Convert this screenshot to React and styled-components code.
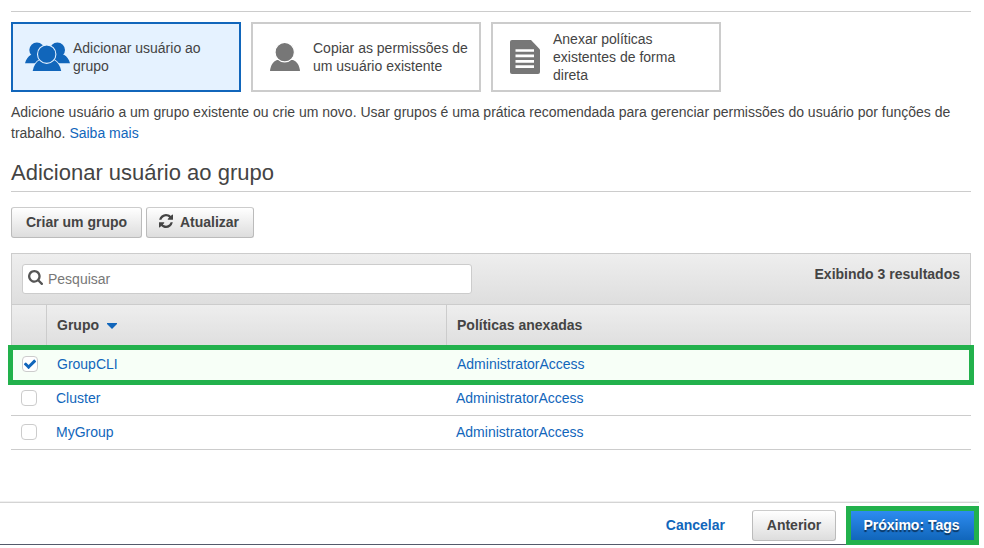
import React from "react";
import styled, { createGlobalStyle } from "styled-components";

const GlobalStyle = createGlobalStyle`
  * { box-sizing: border-box; }
  html, body { margin: 0; background: #fff; overflow: hidden; }
  body {
    font-family: "Liberation Sans", Arial, sans-serif;
    font-size: 14px;
    color: #444;
  }
`;

const Page = styled.div`
  width: 979px;
  height: 545px;
  overflow: hidden;
  display: flex;
  flex-direction: column;
`;

const Content = styled.main`
  height: 501px;
  flex: none;
  padding: 11px 8px 0 11px;
`;

const OptionList = styled.div`
  display: flex;
  gap: 10px;
  padding-top: 10px;
  border-top: 1px solid #ccc;
`;

const OptionCard = styled.div`
  width: 230px;
  height: 70px;
  display: flex;
  align-items: center;
  border: 2px solid ${(p) => (p.$active ? "#1166bb" : "#ccc")};
  background: ${(p) => (p.$active ? "#e5f2ff" : "#fff")};
  color: ${(p) => (p.$active ? "#1166bb" : "#777")};
`;

const OptionIcon = styled.div`
  width: 60px;
  flex: none;
  display: flex;
  justify-content: center;
  padding-left: ${(p) => (p.$wide ? 8 : 4)}px;
  svg { display: block; flex: none; }
`;

const OptionLabel = styled.div`
  line-height: 18px;
  color: #444;
  white-space: pre;
`;

const Description = styled.div`
  margin-top: 10px;
  line-height: 21px;
  white-space: pre;
`;

const DescriptionLine = styled.div`
  height: 21px;
`;

const Link = styled.a`
  color: #1166bb;
  text-decoration: none;
`;

const SectionTitle = styled.h2`
  margin: 14px 0 15px;
  height: 34px;
  line-height: 29px;
  font-size: 22px;
  font-weight: 400;
  border-bottom: 1px solid #ccc;
`;

const ButtonRow = styled.div`
  display: flex;
  gap: 4px;
  margin-bottom: 15px;
`;

const Button = styled.button`
  width: ${(p) => p.$width}px;
  height: ${(p) => (p.$primary ? 29 : 31)}px;
  flex: none;
  display: flex;
  align-items: center;
  justify-content: center;
  gap: 7px;
  padding: 0 ${(p) => p.$nudge || 0}px 1px 0;
  font: bold 14px "Liberation Sans", Arial, sans-serif;
  white-space: pre;
  border: ${(p) => (p.$primary ? "0" : "1px solid #bbb")};
  border-top-color: #ccc;
  border-radius: ${(p) => (p.$primary ? 0 : 3)}px;
  color: ${(p) => (p.$primary ? "#fff" : "#444")};
  background: ${(p) =>
    p.$primary
      ? "linear-gradient(#2d8cf0, #1166bb)"
      : "linear-gradient(#fff, #ddd)"};
  text-shadow: ${(p) => (p.$primary ? "0 2px 1px rgba(0, 0, 0, 0.55)" : "none")};
  svg { margin-top: -3px; }
`;

const SearchBar = styled.div`
  height: 52px;
  display: flex;
  justify-content: space-between;
  padding: 10px 10px 0;
  border: 1px solid #ccc;
  background: linear-gradient(#eee, #dedede);
`;

const SearchField = styled.div`
  width: 450px;
  height: 30px;
  display: flex;
  align-items: center;
  gap: 5px;
  padding-left: 5px;
  border: 1px solid #ccc;
  border-radius: 3px;
  background: #fff;
  color: #777;
  svg { margin-top: -3px; color: #555; }
`;

const ResultCount = styled.div`
  font-weight: bold;
  line-height: 20px;
`;

const HeaderRow = styled.div`
  display: grid;
  grid-template-columns: 34px 400px 1fr;
  height: 40px;
  border: solid #ccc;
  border-width: 0 1px;
  background: linear-gradient(#eee, #dfdfdf);
`;

const HeaderCell = styled.div`
  display: flex;
  align-items: center;
  gap: 8px;
  padding-left: 10px;
  font-weight: bold;
  border-left: ${(p) => (p.$divided ? "1px solid #ccc" : "0")};
  svg { margin-top: 2px; }
`;

const GroupRow = styled.div`
  display: grid;
  grid-template-columns: 35px 400px 1fr;
  align-items: center;
  height: 34px;
  padding-bottom: 2px;
  border-bottom: 1px solid #ccc;
`;

const HighlightedRow = styled(GroupRow)`
  position: relative;
  z-index: 1;
  grid-template-columns: 34px 400px 1fr;
  height: 40px;
  margin: 0 -3px -3px;
  border: 5px solid #22b14c;
  background: #f7fff7;
`;

const GroupCell = styled.div`
  padding-left: 10px;
  line-height: 20px;
`;

const Checkbox = styled.span`
  width: 16px;
  height: 16px;
  display: flex;
  align-items: center;
  justify-content: center;
  border: 1px solid #ccc;
  border-radius: 4px;
  background: #fff;
  color: #1166bb;
  svg { flex: none; margin-bottom: 1px; }
`;

const CheckCell = styled.div`
  padding-left: ${(p) => p.$pad}px;
`;

const Footer = styled.footer`
  height: 44px;
  flex: none;
  display: flex;
  justify-content: flex-end;
  align-items: flex-start;
  border-top: 1px solid #f0f0f0;
  border-bottom: 1px solid #555a6b;
  box-shadow: inset 0 1px #d4d4d4;
`;

const CancelLink = styled(Link)`
  margin: 13px 27px 0 0;
  font-weight: bold;
  line-height: 20px;
`;

const PreviousSlot = styled.div`
  padding-top: 8px;
  margin-right: 10px;
`;

const NextHighlight = styled.div`
  margin-top: 4px;
  width: 133px;
  height: 39px;
  flex: none;
  border: 5px solid #22b14c;
`;

const GroupIcon = () => (
  <svg width="45" height="30" viewBox="0 0 45 30" fill="currentColor">
    <circle cx="11.900" cy="8" r="7.600" />
    <circle cx="32.400" cy="8" r="7.600" />
    <path d="M0 21.300C1 17.300 3 14.500 6 12.800h12v8.500zM45 21.300c-1-4-3-6.800-6-8.500H27v8.500z" />
    <path
      d="M14.600 18C11 20 8.700 23.800 7.700 29h28.500C35.200 23.800 32.600 20 29 18z"
      stroke="#e5f2ff"
      strokeWidth="1.600"
    />
    <path d="M14.600 18C11 20 8.700 23.800 7.700 29h28.500C35.200 23.800 32.600 20 29 18z" />
    <circle cx="21.700" cy="12.200" r="9.200" stroke="#e5f2ff" strokeWidth="1.100" />
  </svg>
);

const UserIcon = () => (
  <svg width="30" height="28" viewBox="0 0 30 28" fill="currentColor">
    <path d="M0 28c.5-5.500 3-9.500 7-11h16c4 1.500 6.500 5.500 7 11z" />
    <circle cx="14.700" cy="9.200" r="9.700" stroke="#fff" strokeWidth="1.200" />
  </svg>
);

const PolicyIcon = () => (
  <svg width="30" height="34" viewBox="0 0 30 34">
    <path d="M2 0h19l9 9.500V32a2 2 0 0 1-2 2H2a2 2 0 0 1-2-2V2a2 2 0 0 1 2-2z" fill="currentColor" />
    <path d="M5.500 10.500H24M5.500 15.900H24M5.500 21.300H24M5.500 26.600H24" stroke="#fff" strokeWidth="2.700" />
  </svg>
);

const RefreshIcon = () => (
  <svg width="14" height="14" viewBox="0 0 1536 1536" fill="currentColor">
    <path d="M1511 928q0 5-1 7-64 268-268 434.5t-478 166.5q-146 0-282.5-55t-243.5-157l-129 129q-19 19-45 19t-45-19-19-45v-448q0-26 19-45t45-19h448q26 0 45 19t19 45-19 45l-137 137q71 66 161 102t187 36q134 0 250-65t186-179q11-17 53-117 8-23 30-23h192q13 0 22.5 9.5t9.5 22.5zm25-800v448q0 26-19 45t-45 19h-448q-26 0-45-19t-19-45 19-45l138-138q-148-137-349-137-134 0-250 65t-186 179q-11 17-53 117-8 23-30 23h-199q-13 0-22.5-9.5t-9.5-22.5v-7q65-268 270-434.5t480-166.5q146 0 284 55.500t245 156.500l130-129q19-19 45-19t45 19 19 45z" />
  </svg>
);

const SearchIcon = () => (
  <svg width="15" height="15" viewBox="64 128 1664 1664" fill="currentColor">
    <path d="M1216 832q0-185-131.5-316.5t-316.5-131.5-316.5 131.5-131.5 316.5 131.5 316.5 316.5 131.5 316.5-131.5 131.5-316.5zm512 832q0 52-38 90t-90 38q-54 0-90-38l-343-342q-179 124-399 124-143 0-273.5-55.5t-225-150-150-225-55.5-273.5 55.5-273.5 150-225 225-150 273.5-55.5 273.5 55.5 225 150 150 225 55.5 273.5q0 220-124 399l343 343q37 37 37 90z" />
  </svg>
);

const CheckIcon = () => (
  <svg width="14" height="14" viewBox="0 0 1792 1792" fill="currentColor">
    <path d="M1671 566q0 40-28 68l-724 724-136 136q-28 28-68 28t-68-28l-136-136-362-362q-28-28-28-68t28-68l136-136q28-28 68-28t68 28l294 295 656-657q28-28 68-28t68 28l136 136q28 28 28 68z" />
  </svg>
);

const SortIcon = () => (
  <svg width="10" height="6" viewBox="0 0 10 6" fill="#1166bb">
    <path d="M0 0h10v1L5 6 0 1z" />
  </svg>
);

const options = [
  { label: "Adicionar usuário ao\ngrupo", Icon: GroupIcon, active: true },
  { label: "Copiar as permissões de\num usuário existente", Icon: UserIcon },
  { label: "Anexar políticas\nexistentes de forma\ndireta", Icon: PolicyIcon },
];

const groups = [
  { name: "GroupCLI", policy: "AdministratorAccess", selected: true },
  { name: "Cluster", policy: "AdministratorAccess" },
  { name: "MyGroup", policy: "AdministratorAccess" },
];

function Group({ name, policy, selected }) {
  const Row = selected ? HighlightedRow : GroupRow;
  return (
    <Row>
      <CheckCell $pad={selected ? 9 : 10}>
        <Checkbox role="checkbox" aria-checked={!!selected}>
          {selected && <CheckIcon />}
        </Checkbox>
      </CheckCell>
      <GroupCell>
        <Link>{name}</Link>
      </GroupCell>
      <GroupCell>
        <Link>{policy}</Link>
      </GroupCell>
    </Row>
  );
}

export default function App() {
  return (
    <>
      <GlobalStyle />
      <Page>
        <Content>
          <OptionList>
            {options.map(({ label, Icon, active }) => (
              <OptionCard key={label} $active={active}>
                <OptionIcon $wide={active}>
                  <Icon />
                </OptionIcon>
                <OptionLabel>{label}</OptionLabel>
              </OptionCard>
            ))}
          </OptionList>
          <Description>
            <DescriptionLine>
              Adicione usuário a um grupo existente ou crie um novo. Usar grupos é uma prática recomendada para gerenciar permissões do usuário por funções de
            </DescriptionLine>
            <DescriptionLine>
              trabalho. <Link>Saiba mais</Link>
            </DescriptionLine>
          </Description>
          <SectionTitle>Adicionar usuário ao grupo</SectionTitle>
          <ButtonRow>
            <Button $width={131}>Criar um grupo</Button>
            <Button $width={108} $nudge={2}>
              <RefreshIcon />
              Atualizar
            </Button>
          </ButtonRow>
          <SearchBar>
            <SearchField>
              <SearchIcon />
              Pesquisar
            </SearchField>
            <ResultCount>Exibindo 3 resultados</ResultCount>
          </SearchBar>
          <HeaderRow>
            <HeaderCell />
            <HeaderCell $divided>
              Grupo
              <SortIcon />
            </HeaderCell>
            <HeaderCell $divided>Políticas anexadas</HeaderCell>
          </HeaderRow>
          {groups.map((group) => (
            <Group key={group.name} {...group} />
          ))}
        </Content>
        <Footer>
          <CancelLink>Cancelar</CancelLink>
          <PreviousSlot>
            <Button $width={84}>Anterior</Button>
          </PreviousSlot>
          <NextHighlight>
            <Button $primary $width={123} $nudge={2}>
              Próximo: Tags
            </Button>
          </NextHighlight>
        </Footer>
      </Page>
    </>
  );
}
